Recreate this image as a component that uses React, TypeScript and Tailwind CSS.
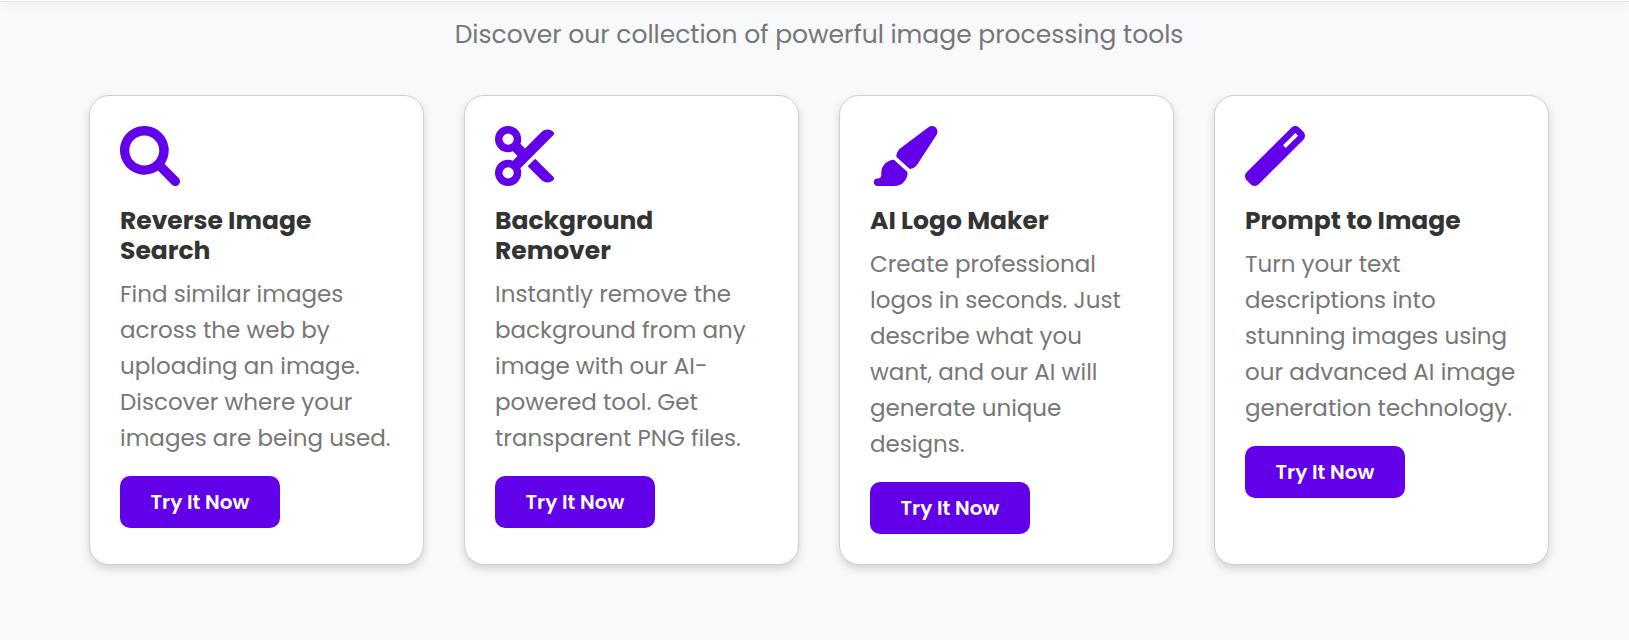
import type { ComponentType, SVGProps } from "react";
import { FaScissors, FaWandMagic } from "react-icons/fa6";

type IconProps = SVGProps<SVGSVGElement>;

function SearchIcon(props: IconProps) {
  return (
    <svg viewBox="0 0 512 512" fill="currentColor" {...props}>
      <path d="M500.3 443.7l-119.7-119.7c27.22-40.41 40.65-90.9 33.46-144.7C401.8 87.79 326.8 13.32 235.2 1.723C99.01-15.51-15.51 99.01 1.724 235.2c11.6 91.64 86.08 166.7 177.6 178.9c53.8 7.189 104.3-6.236 144.7-33.46l119.7 119.7c15.62 15.62 40.95 15.62 56.57 0C515.9 484.7 515.9 459.3 500.3 443.7zM79.1 208c0-70.58 57.42-128 128-128s128 57.42 128 128c0 70.58-57.42 128-128 128S79.1 278.6 79.1 208z" />
    </svg>
  );
}

function BrushIcon(props: IconProps) {
  return (
    <svg viewBox="0 0 576 512" fill="currentColor" {...props}>
      <path d="M224 263.3C224.2 233.3 238.4 205.2 262.4 187.2L499.1 9.605C517.7-4.353 543.6-2.965 560.7 12.9C577.7 28.76 581 54.54 568.5 74.07L406.5 324.1C391.3 347.7 366.6 363.2 339.3 367.1L224 263.3zM320 400C320 461.9 269.9 512 208 512H64C46.33 512 32 497.7 32 480C32 462.3 46.33 448 64 448H68.81C86.44 448 98.4 429.1 96.59 411.6C96.2 407.8 96 403.9 96 400C96 339.6 143.9 290.3 203.7 288.1L319.8 392.5C319.9 394.1 320 397.5 320 400V400z" />
    </svg>
  );
}

type Tool = { title: string; text: string; icon: ComponentType<IconProps>; href: string };

const tools: Tool[] = [
  {
    title: "Reverse Image Search",
    text: "Find similar images across the web by uploading an image. Discover where your images are being used.",
    icon: SearchIcon,
    href: "#reverse-image-search",
  },
  {
    title: "Background Remover",
    text: "Instantly remove the background from any image with our AI-powered tool. Get transparent PNG files.",
    icon: FaScissors as ComponentType<IconProps>,
    href: "#background-remover",
  },
  {
    title: "AI Logo Maker",
    text: "Create professional logos in seconds. Just describe what you want, and our AI will generate unique designs.",
    icon: BrushIcon,
    href: "#ai-logo-maker",
  },
  {
    title: "Prompt to Image",
    text: "Turn your text descriptions into stunning images using our advanced AI image generation technology.",
    icon: FaWandMagic as ComponentType<IconProps>,
    href: "#prompt-to-image",
  },
];

function ToolCard({ title, text, icon: Icon, href }: Tool) {
  return (
    <article className="flex flex-col items-start rounded-[20px] border border-[#d0d0d0] bg-white p-[30px] shadow-[0_4px_8px_rgba(0,0,0,0.15)]">
      <Icon className="mb-5 h-[60px] w-auto text-[#6200ea]" aria-hidden="true" />
      <h3 className="mb-[10px] text-[25px] leading-[30px] font-bold text-[#333333]">{title}</h3>
      <p className="mb-5 text-[23px] leading-[36px] text-[#777777]">{text}</p>
      <a
        href={href}
        className="flex h-[52px] w-[160px] items-center justify-center rounded-[10px] bg-[#6200ea] text-[20px] leading-[30px] font-semibold text-white"
      >
        Try It Now
      </a>
    </article>
  );
}

export default function App() {
  return (
    <div className="min-h-screen bg-[#f8f9fb] font-['Poppins','Inter',sans-serif]">
      <header className="h-[2px] border-b border-[#dfe1e3] bg-white shadow-[0_2px_10px_rgba(0,0,0,0.1)]" />
      <main className="pt-[13px] pb-[75px] pl-[9px]">
        <p className="mb-10 text-center text-[25px] leading-[40px] text-[#777777]">
          Discover our collection of powerful image processing tools
        </p>
        <section className="mx-auto grid max-w-[1460px] grid-cols-4 gap-10">
          {tools.map((tool) => (
            <ToolCard key={tool.title} {...tool} />
          ))}
        </section>
      </main>
    </div>
  );
}
